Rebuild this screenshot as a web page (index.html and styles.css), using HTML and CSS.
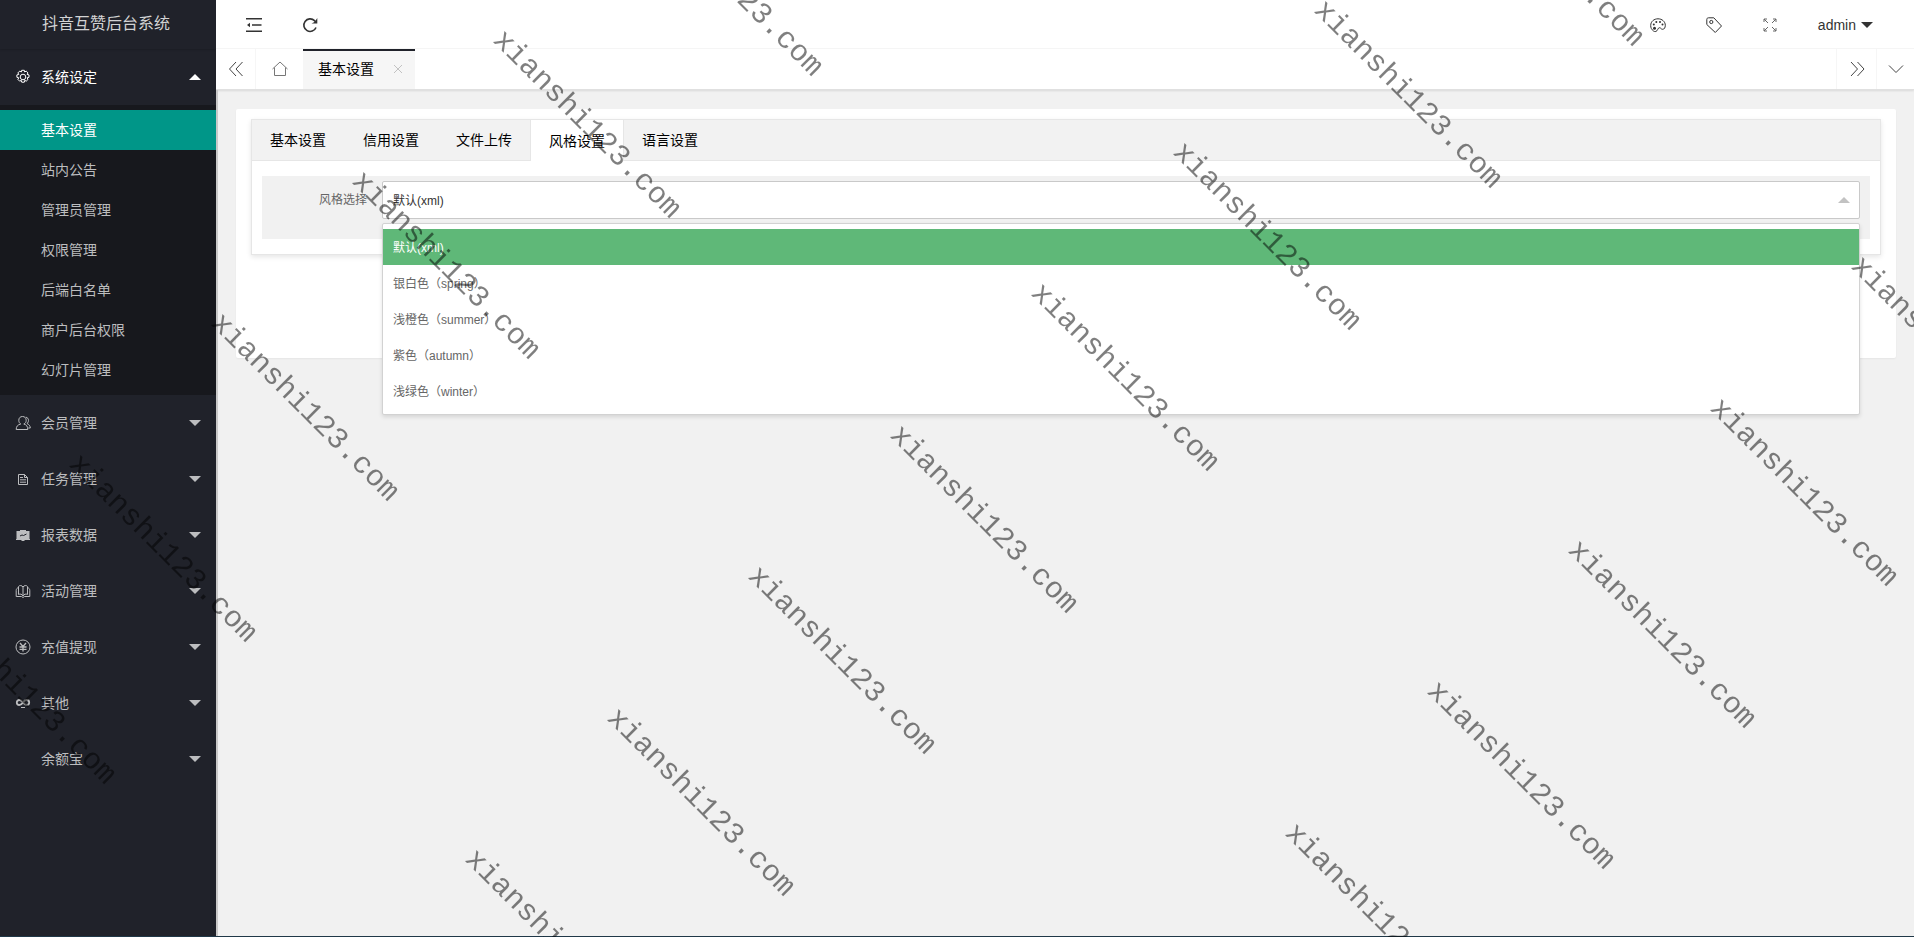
FILE: index.html
```html
<!DOCTYPE html>
<html lang="zh-CN">
<head>
<meta charset="utf-8">
<title>抖音互赞后台系统</title>
<link rel="stylesheet" href="styles.css">
</head>
<body>
<div class="app">
  <aside class="side">
    <div class="logo">抖音互赞后台系统</div>
    <nav class="menu">
      <button class="group open" type="button">
        <svg class="icon" viewBox="0 0 16 16"><circle cx="8" cy="8" r="2.800"/><path d="M6.700 1.300h2.600l.4 1.700 1.500-.9 1.800 1.800-.9 1.500 1.900.5v2.400l-1.900.5.9 1.600-1.800 1.800-1.500-.9-.4 1.900H6.700l-.4-1.900-1.600.9-1.800-1.800.9-1.600-1.900-.5V5.900l1.900-.5-.9-1.500 1.800-1.800 1.600.9z"/></svg>
        <span>系统设定</span><i class="caret up"></i>
      </button>
      <div class="sub">
        <a class="active" href="#">基本设置</a>
        <a href="#">站内公告</a>
        <a href="#">管理员管理</a>
        <a href="#">权限管理</a>
        <a href="#">后端白名单</a>
        <a href="#">商户后台权限</a>
        <a href="#">幻灯片管理</a>
      </div>
      <button class="group" type="button">
        <svg class="icon" viewBox="0 0 16 16"><path d="M7.500 1.500c-2.300 0-3.700 1.500-3.700 3.800 0 1.800.8 3 1.900 3.700C2.600 9.800 1.200 11.500 1.200 14.500h11.600c0-3-1.200-4.700-4-5.500 1.600-.7 2.400-1.900 2.400-3.700 0-2.300-1.400-3.800-3.700-3.800zM10.800 2.200c1.700.3 2.700 1.500 2.700 3.200 0 1.400-.5 2.400-1.600 3.100 2.100.8 3.300 2.400 3.400 4.500h-2"/></svg>
        <span>会员管理</span><i class="caret"></i>
      </button>
      <button class="group" type="button">
        <svg class="icon" viewBox="0 0 16 16"><path d="M3.500 3.500h6l3 3v7h-9zM9.500 3.500v3h3M5 6.500h3M5 8.800h6M5 11.200h6"/></svg>
        <span>任务管理</span><i class="caret"></i>
      </button>
      <button class="group" type="button">
        <svg class="icon" viewBox="0 0 16 16"><path class="solid" d="M1.500 4H5V3h6v1h3.500v8H15v1H9.500v1h-3v-1H1v-1h.5z"/><path class="cut" d="M5 9l2-1 1.500.5L11.500 7"/></svg>
        <span>报表数据</span><i class="caret"></i>
      </button>
      <button class="group" type="button">
        <svg class="icon" viewBox="0 0 16 16"><path d="M8 4C7 2.300 4.500 2 3.500 3.500V11.500C5 10.700 7 11 8 13c1-2 3-2.300 4.500-1.500V3.500C11.500 2 9 2.300 8 4zM8 4v9M3.500 4.500C2 5 1.200 6 1.200 7.500v6H6.500L8 14.500l1.500-1h5.300v-6c0-1.500-.8-2.500-2.300-3"/></svg>
        <span>活动管理</span><i class="caret"></i>
      </button>
      <button class="group" type="button">
        <svg class="icon" viewBox="0 0 16 16"><circle cx="8" cy="8" r="7"/><path stroke-width="1.300" d="M5 4L8 7.500 11 4M8 7.500V12.500M4.500 8h7M4.500 10.300h7"/></svg>
        <span>充值提现</span><i class="caret"></i>
      </button>
      <button class="group" type="button">
        <svg class="icon" viewBox="0 0 16 16"><path stroke-width="1.800" d="M8 7.500C6.500 5.500 5.500 5 4.300 5a2.500 2.500 0 0 0 0 5C6 10 7 9 8 7.500 9 6 10 5 11.700 5a2.500 2.500 0 0 1 0 5C10.500 10 9.500 9.500 8 7.500z"/><path d="M6 12.500h4"/></svg>
        <span>其他</span><i class="caret"></i>
      </button>
      <button class="group" type="button">
        <span class="icon"></span>
        <span>余额宝</span><i class="caret"></i>
      </button>
    </nav>
  </aside>

  <div class="main">
    <header class="top">
      <button type="button" aria-label="收起菜单"><svg class="icon thick" viewBox="0 0 16 16"><path d="M0 1.800h16M6 8h9.500M0 14.200h16"/><path class="solid" d="M1 8l3-2.200v4.400z"/></svg></button>
      <button type="button" aria-label="刷新"><svg class="icon thick" viewBox="0 0 16 16"><path d="M14 10.500A6.300 6.300 0 1 1 12.500 3.600L14 5.200"/><path class="solid" d="M15.300 1v5.500H9.500l2-1 1.500-1z"/></svg></button>
      <span class="spacer"></span>
      <button type="button" aria-label="主题"><svg class="icon" viewBox="0 0 16 16"><path d="M3.500 14C1.500 12.500.7 10.800.7 8.500.7 4.500 4 1.800 8 1.800s7.300 2.800 7.300 6.500c0 2.300-1 4-2.600 4-1.800 0-1.800-1.600-3.200-1.600-1.800 0-1.700 3.300-3.700 3.800-.8.200-1.600 0-2.300-.5z"/><g class="solid"><circle cx="4.500" cy="11.300" r="1.500"/><circle cx="3.800" cy="7.600" r="1"/><circle cx="6.300" cy="4.900" r="1"/><circle cx="10" cy="4.900" r="1"/><circle cx="12.500" cy="7.600" r="1"/></g></svg></button>
      <button type="button" aria-label="标签"><svg class="icon" viewBox="0 0 16 16"><path d="M.8 2.500c0-1 .6-1.700 1.700-1.700h5.300L15.500 9 9.300 15.500.8 7.500z"/><circle cx="5.300" cy="5" r="1.600"/></svg></button>
      <button type="button" aria-label="全屏"><svg class="icon light" viewBox="0 0 16 16"><path d="M2 5V2h3M11 2h3v3M14 11v3h-3M5 14H2v-3M2 2l4 4M14 2l-4 4M14 14l-4-4M2 14l4-4"/></svg></button>
      <button class="user" type="button">admin<i class="caret"></i></button>
    </header>
    <div class="tabs">
      <button class="ctl prev" type="button" aria-label="向左"><svg class="icon" viewBox="0 0 16 16"><path d="M8 1L1.500 8 8 15M14.500 1L8 8l6.500 7"/></svg></button>
      <button class="home" type="button" aria-label="主页"><svg class="icon" viewBox="0 0 16 16"><path d="M.5 8L8 1l7.500 7M2.500 6.500V14.500h11V6.500"/></svg></button>
      <div class="page"><a href="#">基本设置</a><button type="button" aria-label="关闭"><svg viewBox="0 0 10 10"><path d="M1 1l8 8M9 1L1 9"/></svg></button></div>
      <span class="spacer"></span>
      <button class="ctl" type="button" aria-label="向右"><svg class="icon" viewBox="0 0 16 16"><path d="M2 1l6.500 7L2 15M8.500 1L15 8l-6.500 7"/></svg></button>
      <button class="ctl more" type="button" aria-label="更多"><svg class="icon" viewBox="0 0 16 16"><path d="M1 4.500l7 7 7-7"/></svg></button>
    </div>
    <main class="body">
      <section class="card">
        <div class="box">
          <div class="box-tabs">
            <button type="button">基本设置</button>
            <button type="button">信用设置</button>
            <button type="button">文件上传</button>
            <button class="active" type="button">风格设置</button>
            <button type="button">语言设置</button>
          </div>
          <form class="form">
            <div class="row">
              <label for="style">风格选择</label>
              <div class="pick">
                <select id="style"><option>默认(xml)</option></select>
                <i class="caret up"></i>
                <ul class="options" role="listbox">
                  <li class="active" role="option" aria-selected="true">默认(xml)</li>
                  <li role="option">银白色（spring）</li>
                  <li role="option">浅橙色（summer）</li>
                  <li role="option">紫色（autumn）</li>
                  <li role="option">浅绿色（winter）</li>
                </ul>
              </div>
            </div>
          </form>
        </div>
      </section>
    </main>
  </div>
</div>
<svg class="marks" aria-hidden="true">
  <text transform="translate(634 -101) rotate(45)">xianshi123.com</text>
  <text transform="translate(492 41) rotate(45)">xianshi123.com</text>
  <text transform="translate(351 182) rotate(45)">xianshi123.com</text>
  <text transform="translate(210 324) rotate(45)">xianshi123.com</text>
  <text transform="translate(68 465) rotate(45)">xianshi123.com</text>
  <text transform="translate(-73 607) rotate(45)">xianshi123.com</text>
  <text transform="translate(1455 -131) rotate(45)">xianshi123.com</text>
  <text transform="translate(1313 11) rotate(45)">xianshi123.com</text>
  <text transform="translate(1172 153) rotate(45)">xianshi123.com</text>
  <text transform="translate(1030 294) rotate(45)">xianshi123.com</text>
  <text transform="translate(889 436) rotate(45)">xianshi123.com</text>
  <text transform="translate(747 577) rotate(45)">xianshi123.com</text>
  <text transform="translate(606 719) rotate(45)">xianshi123.com</text>
  <text transform="translate(464 860) rotate(45)">xianshi123.com</text>
  <text transform="translate(1850 267) rotate(45)">xianshi123.com</text>
  <text transform="translate(1709 409) rotate(45)">xianshi123.com</text>
  <text transform="translate(1567 551) rotate(45)">xianshi123.com</text>
  <text transform="translate(1426 692) rotate(45)">xianshi123.com</text>
  <text transform="translate(1284 834) rotate(45)">xianshi123.com</text>
</svg>
</body>
</html>
```
FILE: styles.css
```css
* { box-sizing: border-box; }
body {
  margin: 0;
  font: 14px/24px "Liberation Sans", "Noto Sans CJK SC", sans-serif;
  color: #333;
  background: #f1f1f1;
}
button, select { font: inherit; color: inherit; }
button { margin: 0; padding: 0; border: 0; background: none; }
a { color: inherit; text-decoration: none; }
.app { display: flex; min-height: 100vh; border-bottom: 1px solid #203848; }
.spacer { flex: 1; }

.icon { width: 16px; height: 16px; fill: none; stroke: currentColor; stroke-width: 1; flex: none; }
.icon.thick { stroke-width: 1.6; }
.icon.light { color: #666; }
.icon .solid { fill: currentColor; stroke: none; }
.icon .cut { stroke: #20222a; }
.caret { border: 6px solid transparent; border-top-color: currentColor; border-bottom: 0; }
.caret.up { border-top: 0; border-bottom: 6px solid currentColor; }

.side { width: 216px; flex: none; background: #20222a; color: #bcbdbf; }
.logo {
  height: 49px;
  padding-right: 4px;
  line-height: 48px;
  font-size: 16px;
  text-align: center;
  color: #d2d3d4;
  box-shadow: 0 1px 2px rgba(0, 0, 0, .15);
}
.group {
  display: flex;
  align-items: center;
  width: 100%;
  height: 56px;
  padding: 0 15px;
  gap: 10px;
}
.group span { flex: 1; text-align: left; }
.group .icon { flex: none; }
.group.open { color: #fff; }
.sub { padding: 5px 0; background: #17181d; }
.sub a { display: block; padding-left: 41px; line-height: 40px; }
.sub .active { background: #009688; color: #fff; }

.main { flex: 1; min-width: 0; display: flex; flex-direction: column; }
.top {
  display: flex;
  align-items: center;
  height: 49px;
  padding: 1px 41px 0 30px;
  background: #fff;
  border-bottom: 1px solid #f6f6f6;
  gap: 40px;
}
.top button { display: flex; justify-content: center; align-items: center; }
.top .user { gap: 5px; }
.tabs {
  display: flex;
  height: 41px;
  background: #fff;
  border-bottom: 1px solid #e0e0e0;
  box-shadow: 0 1px 2px rgba(0, 0, 0, .1);
  color: #444;
}
.tabs button { display: flex; justify-content: center; align-items: center; }
.ctl { width: 40px; border-left: 1px solid #f6f6f6; }
.ctl.prev { border-left: 0; border-right: 1px solid #f6f6f6; }
.ctl.more { width: 38px; }
.home { width: 47px; color: #777; }
.page {
  display: flex;
  align-items: center;
  gap: 19px;
  padding: 0 12px 2px 15px;
  border-top: 2px solid #20222a;
  background: #f6f6f6;
  color: #000;
}
.page svg { width: 10px; height: 10px; stroke: #c2c2c2; fill: none; }
.body { flex: 1; padding: 19px 18px; border-left: 2px solid #c9c9c9; }
.card { padding: 10px 15px 103px; background: #fff; border-radius: 2px; box-shadow: 0 1px 2px rgba(0, 0, 0, .05); }
.box { border: 1px solid #e6e6e6; box-shadow: 0 2px 5px rgba(0, 0, 0, .1); }
.box-tabs { display: flex; height: 41px; background: #f2f2f2; border-bottom: 1px solid #e6e6e6; }
.box-tabs button { padding: 0 18px; border-right: 1px solid transparent; color: #000; }
.box-tabs .active {
  height: 41px;
  margin-left: -1px;
  background: #fff;
  border-left: 1px solid #e6e6e6;
  border-right-color: #e6e6e6;
}
.form { padding: 15px 10px; font-size: 12px; }
.row { display: flex; padding: 5px 10px 20px 0; background: #f1f1f1; }
.row label { width: 120px; padding-right: 15px; line-height: 38px; text-align: right; color: #666; }
.pick { position: relative; flex: 1; }
.pick select {
  display: block;
  width: 100%;
  height: 38px;
  padding: 2px 10px 0;
  border: 1px solid #c9c9c9;
  border-radius: 2px;
  background: #fff;
  appearance: none;
}
.pick .caret { position: absolute; right: 10px; top: 16px; color: #c2c2c2; }
.options {
  position: absolute;
  top: 42px;
  left: 0;
  right: 0;
  margin: 0;
  padding: 5px 0;
  list-style: none;
  line-height: 34px;
  color: #666;
  background: #fff;
  border: 1px solid #d2d2d2;
  border-radius: 2px;
  box-shadow: 0 2px 4px rgba(0, 0, 0, .12);
}
.options li { padding: 2px 10px 0; }
.options .active { background: #5fb878; color: #fff; }
.marks {
  position: fixed;
  inset: 0;
  width: 100%;
  height: 100%;
  pointer-events: none;
  fill: rgba(0, 0, 0, .5);
  font: 30px "Liberation Mono", monospace;
}
```
